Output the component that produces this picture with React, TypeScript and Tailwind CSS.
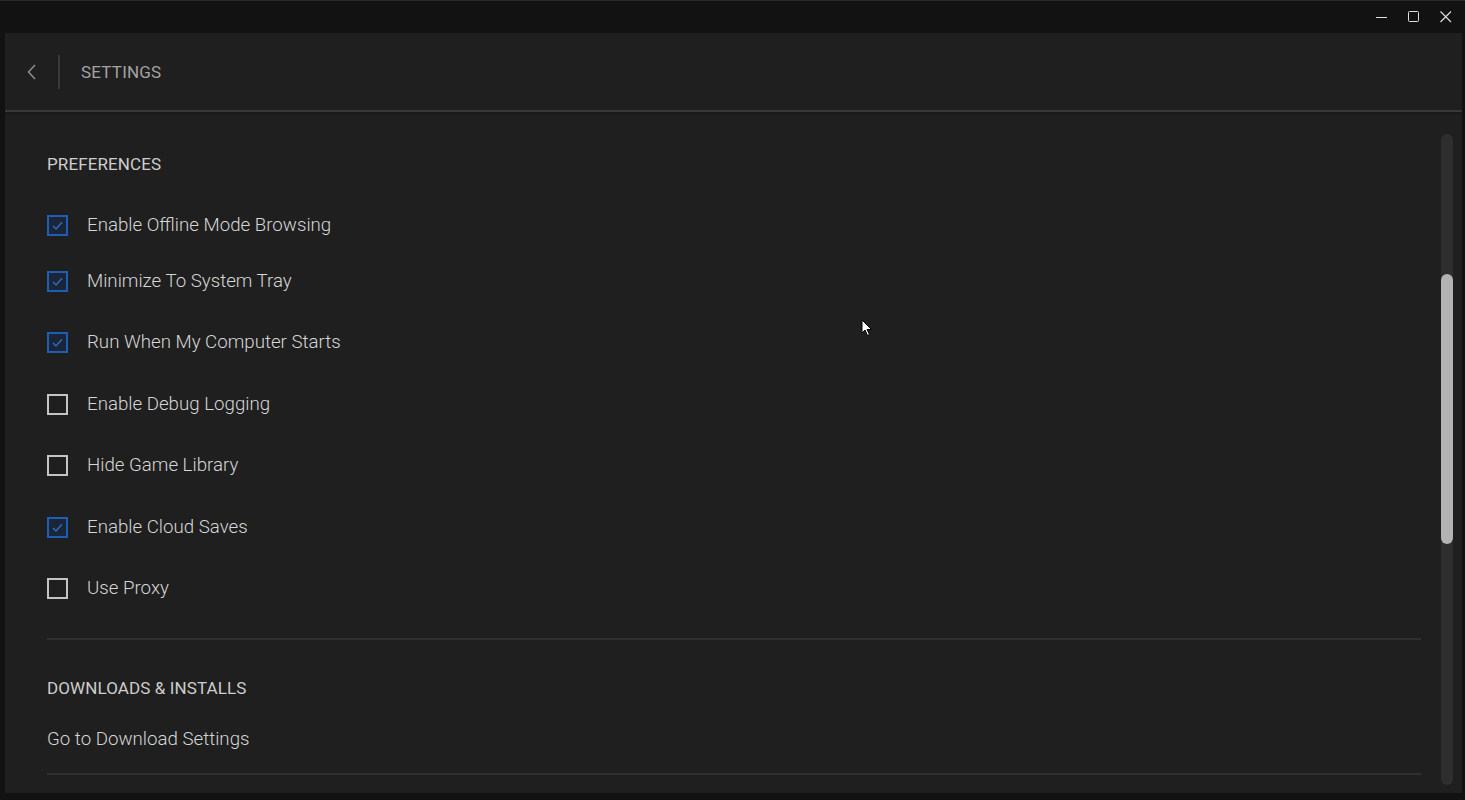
import React from "react";

const items: { label: string; checked: boolean; mt: string }[] = [
  { label: "Enable Offline Mode Browsing", checked: true, mt: "mt-[41px]" },
  { label: "Minimize To System Tray", checked: true, mt: "mt-[36px]" },
  { label: "Run When My Computer Starts", checked: true, mt: "mt-[41px]" },
  { label: "Enable Debug Logging", checked: false, mt: "mt-[42px]" },
  { label: "Hide Game Library", checked: false, mt: "mt-[41px]" },
  { label: "Enable Cloud Saves", checked: true, mt: "mt-[42px]" },
  { label: "Use Proxy", checked: false, mt: "mt-[41px]" },
];

function Box({ checked }: { checked: boolean }) {
  if (checked) {
    return (
      <div className="w-[21px] h-[21px] border-2 border-[#1c5fb8] bg-[#1b2536] flex items-center justify-center shrink-0">
        <svg width="15" height="15" viewBox="0 0 15 15" fill="none">
          <path d="M3 8 L6 11 L12 4.2" stroke="#2b6cc0" strokeWidth="1.5" />
        </svg>
      </div>
    );
  }
  return <div className="w-[21px] h-[21px] border-2 border-[#c4c4c4] shrink-0" />;
}

export default function App() {
  return (
    <div
      className="w-[1465px] h-[800px] bg-[#121212] flex flex-col relative overflow-hidden"
      style={{ fontFamily: "Roboto, 'Liberation Sans', sans-serif" }}
    >
      {/* title bar */}
      <div className="h-[33px] flex items-center justify-end pr-[12px] gap-[18px] border-t border-[#2a2a2a]">
        <svg width="14" height="14" viewBox="0 0 14 14">
          <path d="M1 7.5 H12" stroke="#e0e0e0" strokeWidth="1" />
        </svg>
        <svg width="14" height="14" viewBox="0 0 14 14">
          <rect x="1.5" y="1.5" width="10" height="10" rx="1" fill="none" stroke="#e0e0e0" strokeWidth="1" />
        </svg>
        <svg width="14" height="14" viewBox="0 0 14 14">
          <path d="M1.5 1.5 L12 12 M12 1.5 L1.5 12" stroke="#e0e0e0" strokeWidth="1.1" />
        </svg>
      </div>

      {/* main panel */}
      <div className="flex-1 ml-[5px] mr-[3px] mb-[7px] bg-[#1f1f1f] flex flex-col min-h-0">
        {/* header */}
        <div className="h-[79px] flex items-center border-b-2 border-[#383838] shrink-0">
          <div className="w-[53px] flex justify-center">
            <svg width="12" height="18" viewBox="0 0 12 18" fill="none">
              <path d="M9 2 L2.5 9 L9 16" stroke="#8a8a8a" strokeWidth="1.6" />
            </svg>
          </div>
          <div className="w-[2px] h-[34px] bg-[#3a3a3a]" />
          <div className="ml-[21px] text-[17px] text-[#a3a3a3] tracking-[0.2px] leading-[20px]">SETTINGS</div>
        </div>
        <div className="h-[3px] bg-[#1a1a1a] shrink-0" />

        {/* content */}
        <div className="flex-1 flex min-h-0">
          <div className="flex-1 pl-[42px] pr-[20px] pt-[39px] flex flex-col">
            <div className="text-[17px] text-[#cdcdcd] leading-[20px] tracking-[0.1px]">PREFERENCES</div>
            {items.map((it) => (
              <div key={it.label} className={`${it.mt} flex items-center h-[20px]`}>
                <Box checked={it.checked} />
                <span className="ml-[19px] text-[18.7px] font-light text-[#d6d6d6] leading-[20px]">{it.label}</span>
              </div>
            ))}
            <div className="mt-[40px] h-[2px] bg-[#2f2f2f]" />
            <div className="mt-[38px] text-[17px] text-[#cdcdcd] leading-[20px] tracking-[0.1px]">
              DOWNLOADS &amp; INSTALLS
            </div>
            <div className="mt-[31px] text-[18.7px] font-light text-[#d6d6d6] leading-[20px]">Go to Download Settings</div>
            <div className="mt-[24px] h-[2px] bg-[#2f2f2f]" />
          </div>
          {/* scrollbar */}
          <div className="w-[21px] pr-[9px] pt-[19px] pb-[8px] flex">
            <div className="w-[12px] bg-[#2e2e2e] rounded-full flex flex-col pt-[140px]">
              <div className="h-[270px] bg-[#b3b3b3] rounded-full" />
            </div>
          </div>
        </div>
      </div>

      {/* mouse cursor */}
      <svg className="absolute left-[861px] top-[319px]" width="12" height="18" viewBox="0 0 12 18">
        <path d="M1 1 L1 14 L4 11 L6.5 16.5 L8.5 15.5 L6 10.5 L10.5 10.5 Z" fill="#ffffff" stroke="#000000" strokeWidth="1" />
      </svg>
    </div>
  );
}
